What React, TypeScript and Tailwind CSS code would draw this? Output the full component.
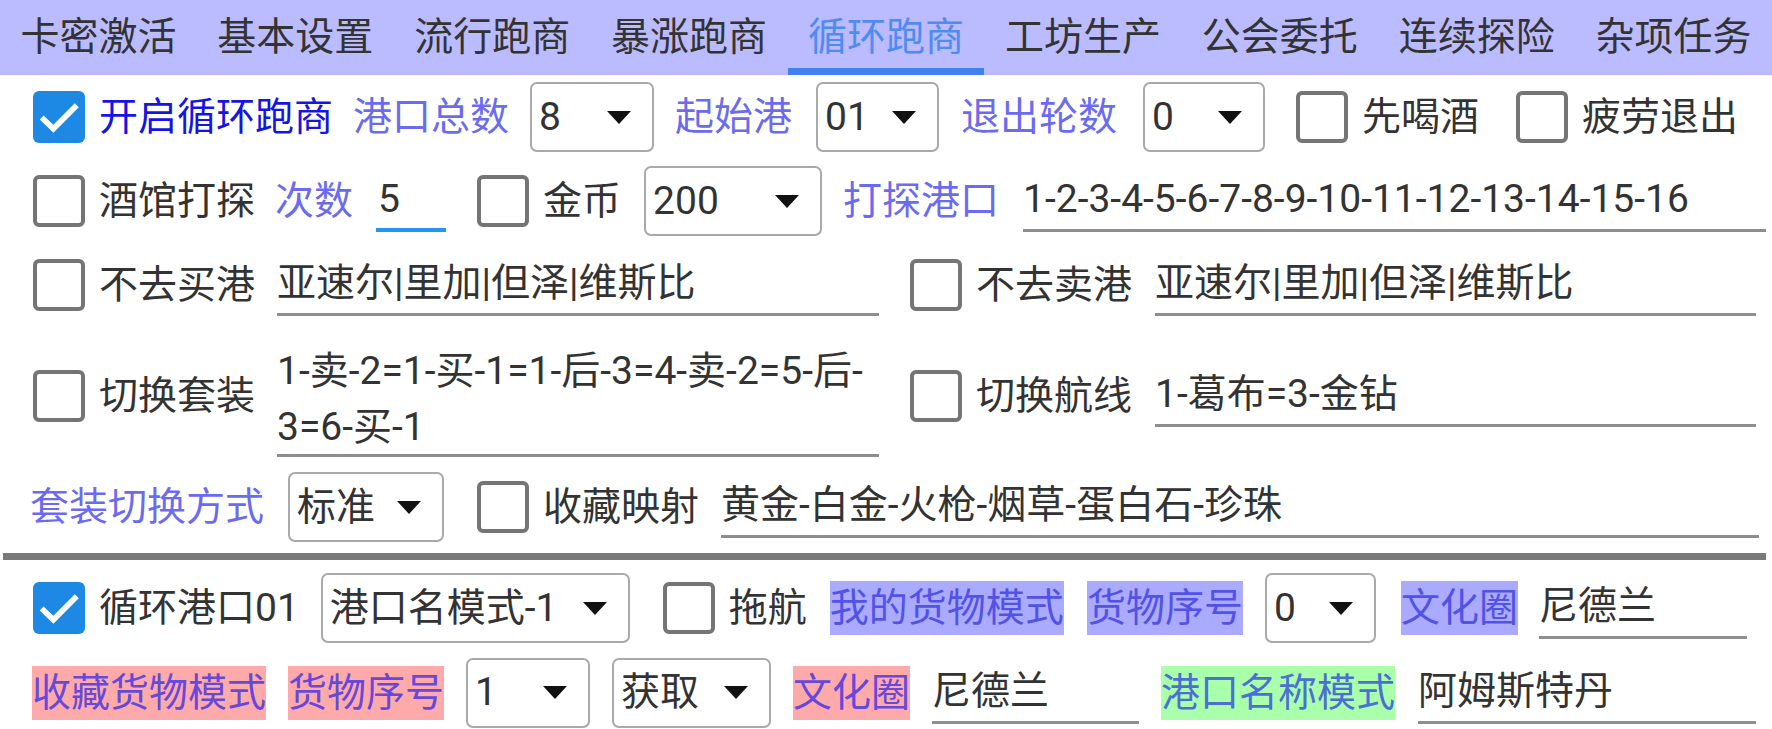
import type { ReactNode } from 'react';

const TABS = ['卡密激活', '基本设置', '流行跑商', '暴涨跑商', '循环跑商', '工坊生产', '公会委托', '连续探险', '杂项任务'];
const ACTIVE_TAB = 4;

function CheckBox({ checked = false, className = '' }: { checked?: boolean; className?: string }) {
    if (checked) {
        return (
            <div className={`w-[52px] h-[52px] shrink-0 rounded-[6px] bg-[#1e88e5] ${className}`}>
                <svg viewBox="0 0 24 24" className="w-full h-full">
                    <path d="M4 12.2l5.4 5.2L20.2 6.6" fill="none" stroke="#ffffff" strokeWidth="2.6" />
                </svg>
            </div>
        );
    }
    return <div className={`w-[52px] h-[52px] shrink-0 rounded-[6px] border-[4px] border-[#757575] bg-white ${className}`} />;
}

function Check({ checked, label, className = '', labelClass = 'text-[#333333]' }: { checked?: boolean; label: string; className?: string; labelClass?: string }) {
    return (
        <div className={`flex items-center shrink-0 ${className}`}>
            <CheckBox checked={checked} />
            <span className={`ml-[14px] whitespace-nowrap ${labelClass}`}>{label}</span>
        </div>
    );
}

function Label({ children, className = '' }: { children: ReactNode; className?: string }) {
    return <span className={`shrink-0 whitespace-nowrap text-[#6b6bf0] ${className}`}>{children}</span>;
}

// highlighted label with a coloured block behind it
function Tag({ children, className = '' }: { children: ReactNode; className?: string }) {
    return <span className={`shrink-0 whitespace-nowrap h-[54px] leading-[54px] ${className}`}>{children}</span>;
}

function Select({ value, className = '' }: { value: string; className?: string }) {
    return (
        <div className={`h-[70px] shrink-0 flex items-center justify-between pl-[7px] pr-[21px] border-2 border-[#a9a9a9] rounded-[7px] text-[#333333] ${className}`}>
            <span className="whitespace-nowrap">{value}</span>
            <svg width="24" height="13" viewBox="0 0 24 13" className="shrink-0">
                <path d="M0 0h24L12 13z" fill="#111111" />
            </svg>
        </div>
    );
}

function Field({ value, className = '' }: { value: string; className?: string }) {
    return (
        <div className={`h-[62px] flex items-center border-b-[3px] border-[#8e8e8e] text-[#333333] whitespace-nowrap overflow-hidden ${className}`}>
            {value}
        </div>
    );
}

export default function App() {
    return (
        <div className="w-[1772px] h-[729px] overflow-hidden bg-white text-[39px] leading-none text-[#333333] font-[Roboto,'Noto_Sans_CJK_SC',sans-serif]">
            {/* Tabs */}
            <div className="h-[75px] flex bg-[#bbbbff]">
                {TABS.map((tab, i) => (
                    <div
                        key={tab}
                        className={`flex-1 flex items-center justify-center whitespace-nowrap ${i === ACTIVE_TAB ? 'text-[#4e8cf2] shadow-[inset_0_-7px_0_#3f82ee]' : 'text-[#333333]'}`}
                    >
                        {tab}
                    </div>
                ))}
            </div>

            {/* Row 1 */}
            <div className="h-[84px] flex items-center pl-[33px]">
                <Check checked label="开启循环跑商" labelClass="text-[#1414e4]" />
                <Label className="ml-[20px]">港口总数</Label>
                <Select value="8" className="ml-[21px] w-[124px]" />
                <Label className="ml-[21px]">起始港</Label>
                <Select value="01" className="ml-[24px] w-[123px]" />
                <Label className="ml-[22px]">退出轮数</Label>
                <Select value="0" className="ml-[26px] w-[122px]" />
                <Check label="先喝酒" className="ml-[31px]" />
                <Check label="疲劳退出" className="ml-[37px]" />
            </div>

            {/* Row 2 */}
            <div className="h-[84px] flex items-center pl-[33px] pr-[6px]">
                <Check label="酒馆打探" />
                <Label className="ml-[20px]">次数</Label>
                <div className="ml-[23px] w-[70px] h-[62px] shrink-0 flex items-center pl-[2px] border-b-[4px] border-[#2196f3]">5</div>
                <Check label="金币" className="ml-[31px]" />
                <Select value="200" className="ml-[23px] w-[178px]" />
                <Label className="ml-[21px]">打探港口</Label>
                <Field value="1-2-3-4-5-6-7-8-9-10-11-12-13-14-15-16" className="ml-[24px] flex-1" />
            </div>

            {/* Row 3 */}
            <div className="h-[84px] flex">
                <div className="w-1/2 flex items-center pl-[33px] pr-[7px]">
                    <Check label="不去买港" />
                    <Field value="亚速尔|里加|但泽|维斯比" className="ml-[22px] flex-1" />
                </div>
                <div className="w-1/2 flex items-center pl-[24px] pr-[16px]">
                    <Check label="不去卖港" />
                    <Field value="亚速尔|里加|但泽|维斯比" className="ml-[23px] flex-1" />
                </div>
            </div>

            {/* Row 4 */}
            <div className="h-[138px] flex">
                <div className="w-1/2 flex items-center pl-[33px] pr-[7px]">
                    <Check label="切换套装" />
                    <div className="ml-[22px] mt-[8px] flex-1 h-[114px] leading-[56px] border-b-[3px] border-[#8e8e8e] whitespace-nowrap">
                        <div>1-卖-2=1-买-1=1-后-3=4-卖-2=5-后-</div>
                        <div>3=6-买-1</div>
                    </div>
                </div>
                <div className="w-1/2 flex items-center pl-[24px] pr-[16px]">
                    <Check label="切换航线" />
                    <Field value="1-葛布=3-金钻" className="ml-[23px] flex-1" />
                </div>
            </div>

            {/* Row 5 */}
            <div className="h-[84px] flex items-center pl-[30px] pr-[13px]">
                <Label>套装切换方式</Label>
                <Select value="标准" className="ml-[24px] w-[156px]" />
                <Check label="收藏映射" className="ml-[33px]" />
                <Field value="黄金-白金-火枪-烟草-蛋白石-珍珠" className="ml-[22px] flex-1" />
            </div>

            {/* Divider */}
            <div className="mt-[4px] ml-[3px] mr-[6px] h-[7px] bg-[#7a7a7a]" />

            {/* Row 6 */}
            <div className="h-[96px] flex items-center pl-[33px]">
                <Check checked label="循环港口01" />
                <Select value="港口名模式-1" className="ml-[22px] w-[309px]" />
                <Check label="拖航" className="ml-[33px]" />
                <Tag className="ml-[23px] bg-[#aaaaff] text-[#5252e6]">我的货物模式</Tag>
                <Tag className="ml-[23px] bg-[#aaaaff] text-[#5252e6]">货物序号</Tag>
                <Select value="0" className="ml-[22px] w-[111px]" />
                <Tag className="ml-[25px] bg-[#aaaaff] text-[#5252e6]">文化圈</Tag>
                <Field value="尼德兰" className="ml-[21px] w-[208px] shrink-0" />
            </div>

            {/* Row 7 */}
            <div className="h-[73px] flex items-center pl-[32px] pr-[16px]">
                <Tag className="bg-[#ffaaaa] text-[#6648da]">收藏货物模式</Tag>
                <Tag className="ml-[22px] bg-[#ffaaaa] text-[#6648da]">货物序号</Tag>
                <Select value="1" className="ml-[22px] w-[124px]" />
                <Select value="获取" className="ml-[22px] w-[159px]" />
                <Tag className="ml-[22px] bg-[#ffaaaa] text-[#6648da]">文化圈</Tag>
                <Field value="尼德兰" className="ml-[22px] w-[207px] shrink-0" />
                <Tag className="ml-[22px] bg-[#aaffaa] text-[#4a6fd8]">港口名称模式</Tag>
                <Field value="阿姆斯特丹" className="ml-[23px] flex-1" />
            </div>
        </div>
    );
}
